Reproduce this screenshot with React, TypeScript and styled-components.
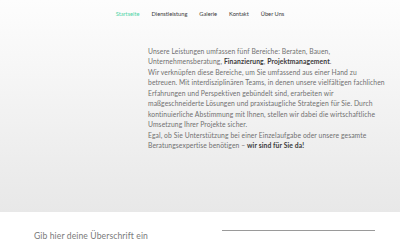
import React from 'react'
import styled, { createGlobalStyle } from 'styled-components'

const GlobalStyle = createGlobalStyle`
  html, body {
    margin: 0;
    padding: 0;
    background: #ffffff;
  }
  body {
    font-family: Lato, 'Liberation Sans', sans-serif;
    -webkit-font-smoothing: antialiased;
  }
`

const Page = styled.div`
  width: 400px;
  height: 250px;
  overflow: hidden;
  display: flex;
  flex-direction: column;
`

const Hero = styled.section`
  height: 212px;
  background: linear-gradient(180deg, #fdfdfd 0%, #f7f7f7 30%, #ededed 75%, #e8e8e8 100%);
  display: flex;
  flex-direction: column;
`

const Nav = styled.nav`
  height: 25px;
  display: flex;
  justify-content: center;
  align-items: center;
  gap: 12px;
  padding-top: 1px;
`

const NavLink = styled.a<{ active?: boolean }>`
  font-size: 5.7px;
  color: ${({ active }) => (active ? '#4cd3a6' : '#3a3a3a')};
  text-decoration: none;
`

const HeroGrid = styled.div`
  display: grid;
  grid-template-columns: 148px 240px;
  padding-top: 20px;
`

const Copy = styled.div`
  grid-column: 2;
  font-size: 6.75px;
  line-height: 10.45px;
  letter-spacing: 0.1px;
  color: #707070;
  font-weight: 400;
`

const Para = styled.p`
  margin: 0;
  white-space: nowrap;
`

const Strong = styled.span`
  color: #3a3a3a;
  font-weight: 700;
`

const Section = styled.section`
  flex: 1;
  background: #ffffff;
  display: grid;
  grid-template-columns: 188px 153px;
  padding-left: 34px;
  align-items: start;
`

const Heading = styled.h2`
  margin: 19px 0 0;
  font-size: 8.6px;
  font-weight: 400;
  color: #7a7a7a;
  white-space: nowrap;
  letter-spacing: 0.1px;
`

const Rule = styled.div`
  margin-top: 18px;
  height: 1px;
  background: #9a9a9a;
`

export default function App() {
  return (
    <>
      <GlobalStyle />
      <Page>
        <Hero>
          <Nav>
            <NavLink active>Startseite</NavLink>
            <NavLink>Dienstleistung</NavLink>
            <NavLink>Galerie</NavLink>
            <NavLink>Kontakt</NavLink>
            <NavLink>Über Uns</NavLink>
          </Nav>
          <HeroGrid>
            <Copy>
              <Para>
                Unsere Leistungen umfassen fünf Bereiche: Beraten, Bauen,
                <br />
                Unternehmensberatung, <Strong>Finanzierung</Strong>, <Strong>Projektmanagement</Strong>.
              </Para>
              <Para>
                Wir verknüpfen diese Bereiche, um Sie umfassend aus einer Hand zu
                <br />
                betreuen. Mit interdisziplinären Teams, in denen unsere vielfältigen fachlichen
                <br />
                Erfahrungen und Perspektiven gebündelt sind, erarbeiten wir
                <br />
                maßgeschneiderte Lösungen und praxistaugliche Strategien für Sie. Durch
                <br />
                kontinuierliche Abstimmung mit Ihnen, stellen wir dabei die wirtschaftliche
                <br />
                Umsetzung Ihrer Projekte sicher.
              </Para>
              <Para>
                Egal, ob Sie Unterstützung bei einer Einzelaufgabe oder unsere gesamte
                <br />
                Beratungsexpertise benötigen – <Strong>wir sind für Sie da!</Strong>
              </Para>
            </Copy>
          </HeroGrid>
        </Hero>
        <Section>
          <Heading>Gib hier deine Überschrift ein</Heading>
          <Rule />
        </Section>
      </Page>
    </>
  )
}
